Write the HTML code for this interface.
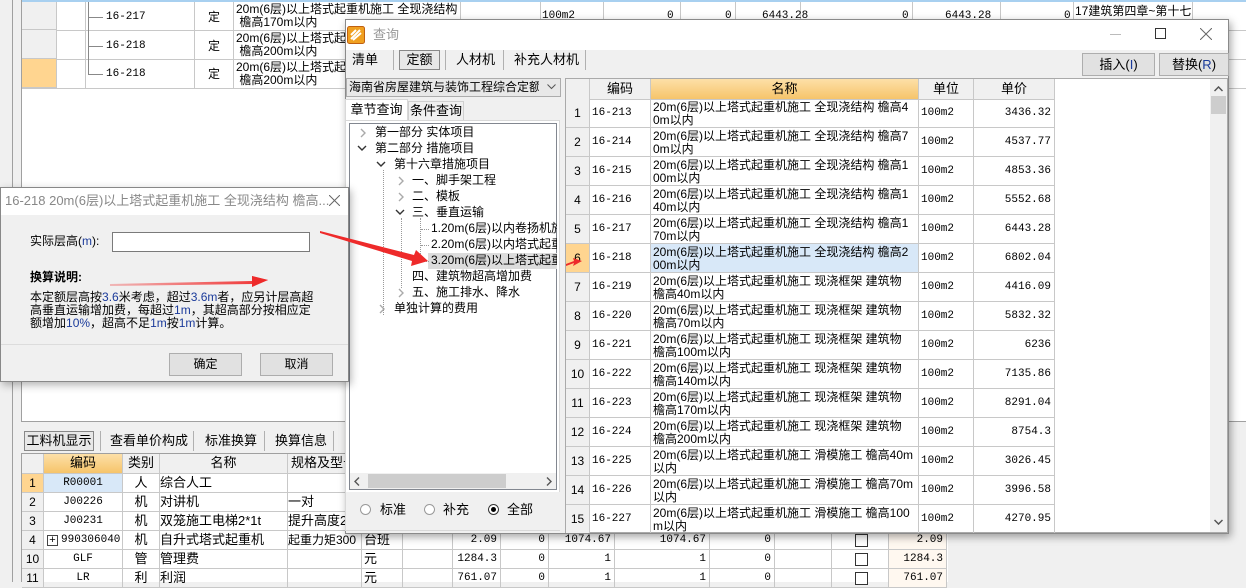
<!DOCTYPE html>
<html><head><meta charset="utf-8">
<style>
*{box-sizing:border-box;margin:0;padding:0}
body{width:1246px;height:582px;overflow:hidden;background:#f0f0f0;position:relative;font-family:"Liberation Sans","Noto Sans CJK SC",sans-serif;font-size:12px;color:#000}
.a{position:absolute}
.t{position:absolute;white-space:nowrap;line-height:13px}
.vl{position:absolute;width:1px;background:#c8c8c8}
.hl{position:absolute;height:1px;background:#c8c8c8}
.cell{position:absolute;border-right:1px solid #c8c8c8;border-bottom:1px solid #c8c8c8;white-space:nowrap;overflow:hidden;line-height:13px}
.r{text-align:right;padding-right:3px;font-family:"Liberation Mono","Noto Sans CJK SC",monospace;font-size:11px}
.m{font-family:"Liberation Mono","Noto Sans CJK SC",monospace;font-size:11px}
.c{text-align:center}
.btn{position:absolute;background:#e1e1e1;border:1px solid #adadad;text-align:center;font-size:12px}
.cr{position:absolute}
</style></head><body>

<div class="a" style="left:12px;top:0;width:1px;height:582px;background:#a0a0a0"></div>
<div class="a" style="left:21px;top:0;width:1225px;height:422px;background:#fff;border-left:1px solid #a0a0a0;border-bottom:1px solid #a0a0a0"></div>
<div class="a" style="left:22px;top:0;width:1224px;height:2px;background:#a8d0f0"></div>
<div class="a" style="left:22px;top:2px;width:35px;height:28px;background:#f0f0f0;border-bottom:1px solid #c8c8c8;border-right:1px solid #c8c8c8"></div>
<div class="a" style="left:22px;top:30px;width:35px;height:29px;background:#f0f0f0;border-bottom:1px solid #c8c8c8;border-right:1px solid #c8c8c8"></div>
<div class="a" style="left:22px;top:59px;width:35px;height:29px;background:#ffd590;border-bottom:1px solid #c8c8c8;border-right:1px solid #c8c8c8"></div>
<div class="hl" style="left:57px;top:30px;width:1189px"></div>
<div class="hl" style="left:57px;top:59px;width:1189px"></div>
<div class="hl" style="left:22px;top:88px;width:1224px"></div>
<div class="vl" style="left:85px;top:2px;height:86px"></div>
<div class="vl" style="left:194px;top:2px;height:86px"></div>
<div class="vl" style="left:233px;top:2px;height:86px"></div>
<div class="vl" style="left:460px;top:2px;height:86px"></div>
<div class="vl" style="left:540px;top:2px;height:20px"></div>
<div class="vl" style="left:603px;top:2px;height:20px"></div>
<div class="vl" style="left:680px;top:2px;height:20px"></div>
<div class="vl" style="left:735px;top:2px;height:20px"></div>
<div class="vl" style="left:800px;top:2px;height:20px"></div>
<div class="vl" style="left:912px;top:2px;height:20px"></div>
<div class="vl" style="left:1000px;top:2px;height:20px"></div>
<div class="vl" style="left:1073px;top:2px;height:20px"></div>
<div class="vl" style="left:1192px;top:2px;height:86px"></div>
<div class="a" style="left:88px;top:17px;width:15px;height:1px;background:#888"></div>
<div class="a" style="left:88px;top:46px;width:15px;height:1px;background:#888"></div>
<div class="a" style="left:88px;top:74px;width:15px;height:1px;background:#888"></div>
<div class="a" style="left:88px;top:2px;width:1px;height:72px;background:#888"></div>
<div class="t m" style="left:106px;top:11px">16-217</div>
<div class="t m" style="left:106px;top:40px">16-218</div>
<div class="t m" style="left:106px;top:68px">16-218</div>
<div class="t" style="left:208px;top:11px">定</div>
<div class="t" style="left:208px;top:40px">定</div>
<div class="t" style="left:208px;top:68px">定</div>
<div class="t" style="left:236px;top:3px">20m(6层)以上塔式起重机施工 全现浇结构<br>&nbsp;檐高170m以内</div>
<div class="t" style="left:236px;top:32px">20m(6层)以上塔式起<br>&nbsp;檐高200m以内</div>
<div class="t" style="left:236px;top:61px">20m(6层)以上塔式起<br>&nbsp;檐高200m以内</div>
<div class="t m" style="left:542px;top:10px">100m2</div>
<div class="t m" style="left:667px;top:10px">0</div>
<div class="t m" style="left:725px;top:10px">0</div>
<div class="t m" style="left:762px;top:10px">6443.28</div>
<div class="t m" style="left:902px;top:10px">0</div>
<div class="t m" style="left:945px;top:10px">6443.28</div>
<div class="t m" style="left:1064px;top:10px">0</div>
<div class="t" style="left:1075px;top:5px">17建筑第四章~第十七</div>

<div class="btn" style="left:24px;top:431px;width:70px;height:20px;line-height:18px;background:#e8e8e8;border:1px solid #888;font-size:13px">工料机显示</div>
<div class="a" style="left:100px;top:431px;width:1px;height:20px;background:#b0b0b0"></div>
<div class="t" style="left:110px;top:434px;font-size:13px">查看单价构成</div>
<div class="a" style="left:193px;top:431px;width:1px;height:20px;background:#b0b0b0"></div>
<div class="t" style="left:205px;top:434px;font-size:13px">标准换算</div>
<div class="a" style="left:264px;top:431px;width:1px;height:20px;background:#b0b0b0"></div>
<div class="t" style="left:275px;top:434px;font-size:13px">换算信息</div>
<div class="a" style="left:333px;top:431px;width:1px;height:20px;background:#b0b0b0"></div>

<div class="a" style="left:21px;top:453px;width:927px;height:129px;background:#fff;border-left:1px solid #a0a0a0;border-top:1px solid #a0a0a0"></div>
<div class="cell" style="left:22px;top:454px;width:22px;height:20px;background:#f0f0f0"></div>
<div class="cell c" style="left:44px;top:454px;width:79px;height:20px;background:linear-gradient(#fde0a8,#f6c46a);line-height:18px;font-size:13px">编码</div>
<div class="cell c" style="left:123px;top:454px;width:37px;height:20px;background:#f0f0f0;line-height:18px;font-size:13px">类别</div>
<div class="cell c" style="left:160px;top:454px;width:128px;height:20px;background:#f0f0f0;line-height:18px;font-size:13px">名称</div>
<div class="cell" style="left:288px;top:454px;width:74px;height:20px;background:#f0f0f0;line-height:18px;font-size:13px;padding-left:3px">规格及型号</div>

<div class="cell c" style="left:22px;top:474px;width:22px;height:19px;background:#ffd590;line-height:18px">1</div>
<div class="cell c m" style="left:44px;top:474px;width:79px;height:19px;background:#d8e8f8;line-height:18px">R00001</div>
<div class="cell c" style="left:123px;top:474px;width:37px;height:19px;line-height:18px;font-size:13px">人</div>
<div class="cell" style="left:160px;top:474px;width:128px;height:19px;line-height:18px;font-size:13px">综合人工</div>
<div class="cell" style="left:288px;top:474px;width:74px;height:19px"></div>

<div class="cell c" style="left:22px;top:493px;width:22px;height:19px;background:#f0f0f0;line-height:18px">2</div>
<div class="cell c m" style="left:44px;top:493px;width:79px;height:19px;line-height:18px">J00226</div>
<div class="cell c" style="left:123px;top:493px;width:37px;height:19px;line-height:18px;font-size:13px">机</div>
<div class="cell" style="left:160px;top:493px;width:128px;height:19px;line-height:18px;font-size:13px">对讲机</div>
<div class="cell" style="left:288px;top:493px;width:74px;height:19px;line-height:18px;font-size:13px">一对</div>

<div class="cell c" style="left:22px;top:512px;width:22px;height:19px;background:#f0f0f0;line-height:18px">3</div>
<div class="cell c m" style="left:44px;top:512px;width:79px;height:19px;line-height:18px">J00231</div>
<div class="cell c" style="left:123px;top:512px;width:37px;height:19px;line-height:18px;font-size:13px">机</div>
<div class="cell" style="left:160px;top:512px;width:128px;height:19px;line-height:18px;font-size:13px">双笼施工电梯2*1t</div>
<div class="cell" style="left:288px;top:512px;width:74px;height:19px;line-height:18px;font-size:13px">提升高度200</div>

<div class="cell c" style="left:22px;top:531px;width:22px;height:19px;background:#f0f0f0;line-height:18px">4</div>
<div class="cell m" style="left:44px;top:531px;width:79px;height:19px;line-height:18px;padding-left:17px">990306040</div>
<div class="a" style="left:47px;top:535px;width:11px;height:11px;border:1px solid #444;font-size:11px;line-height:9px;text-align:center">+</div>
<div class="cell c" style="left:123px;top:531px;width:37px;height:19px;line-height:18px;font-size:13px">机</div>
<div class="cell" style="left:160px;top:531px;width:128px;height:19px;line-height:18px;font-size:13px">自升式塔式起重机</div>
<div class="cell" style="left:288px;top:531px;width:74px;height:19px;line-height:18px;font-size:12px">起重力矩300</div>

<div class="cell c" style="left:22px;top:550px;width:22px;height:19px;background:#f0f0f0;line-height:18px">10</div>
<div class="cell c m" style="left:44px;top:550px;width:79px;height:19px;line-height:18px">GLF</div>
<div class="cell c" style="left:123px;top:550px;width:37px;height:19px;line-height:18px;font-size:13px">管</div>
<div class="cell" style="left:160px;top:550px;width:128px;height:19px;line-height:18px;font-size:13px">管理费</div>
<div class="cell" style="left:288px;top:550px;width:74px;height:19px"></div>

<div class="cell c" style="left:22px;top:569px;width:22px;height:19px;background:#f0f0f0;line-height:18px">11</div>
<div class="cell c m" style="left:44px;top:569px;width:79px;height:19px;line-height:18px">LR</div>
<div class="cell c" style="left:123px;top:569px;width:37px;height:19px;line-height:18px;font-size:13px">利</div>
<div class="cell" style="left:160px;top:569px;width:128px;height:19px;line-height:18px;font-size:13px">利润</div>
<div class="cell" style="left:288px;top:569px;width:74px;height:19px"></div>

<div class="cell" style="left:362px;top:531px;width:41px;height:19px;line-height:18px;font-size:13px;padding-left:2px">台班</div>
<div class="cell" style="left:403px;top:531px;width:50px;height:19px"></div>
<div class="cell r" style="left:453px;top:531px;width:48px;height:19px;line-height:18px">2.09</div>
<div class="cell r" style="left:501px;top:531px;width:48px;height:19px;line-height:18px">0</div>
<div class="cell r" style="left:549px;top:531px;width:66px;height:19px;line-height:18px">1074.67</div>
<div class="cell r" style="left:615px;top:531px;width:95px;height:19px;line-height:18px">1074.67</div>
<div class="cell r" style="left:710px;top:531px;width:65px;height:19px;line-height:18px">0</div>
<div class="cell" style="left:775px;top:531px;width:57px;height:19px"></div>
<div class="cell" style="left:832px;top:531px;width:57px;height:19px"></div>
<div class="cell r" style="left:889px;top:531px;width:58px;height:19px;line-height:18px;background:#fff8f0">2.09</div>

<div class="cell" style="left:362px;top:550px;width:41px;height:19px;line-height:18px;font-size:13px;padding-left:2px">元</div>
<div class="cell" style="left:403px;top:550px;width:50px;height:19px"></div>
<div class="cell r" style="left:453px;top:550px;width:48px;height:19px;line-height:18px">1284.3</div>
<div class="cell r" style="left:501px;top:550px;width:48px;height:19px;line-height:18px">0</div>
<div class="cell r" style="left:549px;top:550px;width:66px;height:19px;line-height:18px">1</div>
<div class="cell r" style="left:615px;top:550px;width:95px;height:19px;line-height:18px">1</div>
<div class="cell r" style="left:710px;top:550px;width:65px;height:19px;line-height:18px">0</div>
<div class="cell" style="left:775px;top:550px;width:57px;height:19px"></div>
<div class="cell" style="left:832px;top:550px;width:57px;height:19px"></div>
<div class="cell r" style="left:889px;top:550px;width:58px;height:19px;line-height:18px;background:#fff8f0">1284.3</div>

<div class="cell" style="left:362px;top:569px;width:41px;height:19px;line-height:18px;font-size:13px;padding-left:2px">元</div>
<div class="cell" style="left:403px;top:569px;width:50px;height:19px"></div>
<div class="cell r" style="left:453px;top:569px;width:48px;height:19px;line-height:18px">761.07</div>
<div class="cell r" style="left:501px;top:569px;width:48px;height:19px;line-height:18px">0</div>
<div class="cell r" style="left:549px;top:569px;width:66px;height:19px;line-height:18px">1</div>
<div class="cell r" style="left:615px;top:569px;width:95px;height:19px;line-height:18px">1</div>
<div class="cell r" style="left:710px;top:569px;width:65px;height:19px;line-height:18px">0</div>
<div class="cell" style="left:775px;top:569px;width:57px;height:19px"></div>
<div class="cell" style="left:832px;top:569px;width:57px;height:19px"></div>
<div class="cell r" style="left:889px;top:569px;width:58px;height:19px;line-height:18px;background:#fff8f0">761.07</div>
<div class="a" style="left:855px;top:534px;width:13px;height:13px;border:1px solid #333;background:#fff"></div>
<div class="a" style="left:855px;top:553px;width:13px;height:13px;border:1px solid #333;background:#fff"></div>
<div class="a" style="left:855px;top:572px;width:13px;height:13px;border:1px solid #333;background:#fff"></div>

<!-- Query dialog -->
<div class="a" style="left:345px;top:19px;width:884px;height:515px;background:#f0f0f0;border:1px solid #8a8a8a;box-shadow:2px 3px 8px rgba(0,0,0,.35)"></div>
<div class="a" style="left:346px;top:20px;width:882px;height:30px;background:#fff"></div>
<svg class="a" style="left:347px;top:26px" width="18" height="18" viewBox="0 0 18 18"><rect x="0.5" y="0.5" width="17" height="17" rx="2" fill="#f0a020" stroke="#c06010"/><path d="M4 13 L13 4 M6 14 L14 7 M4 9 L9 4" stroke="#fff" stroke-width="2"/></svg>
<div class="t" style="left:373px;top:28px;color:#999;font-size:13px">查询</div>
<div class="a" style="left:1110px;top:34px;width:11px;height:1px;background:#bbb"></div>
<div class="a" style="left:1155px;top:28px;width:11px;height:11px;border:1px solid #333"></div>
<svg class="a" style="left:1200px;top:28px" width="12" height="12"><path d="M0 0L12 12M12 0L0 12" stroke="#666" stroke-width="1"/></svg>

<div class="t" style="left:352px;top:53px;font-size:13px">清单</div>
<div class="a" style="left:393px;top:50px;width:1px;height:20px;background:#b0b0b0"></div>
<div class="btn" style="left:399px;top:50px;width:41px;height:20px;line-height:18px;background:#e8e8e8;border:1px solid #888;font-size:13px">定额</div>
<div class="a" style="left:445px;top:50px;width:1px;height:20px;background:#b0b0b0"></div>
<div class="t" style="left:456px;top:53px;font-size:13px">人材机</div>
<div class="a" style="left:503px;top:50px;width:1px;height:20px;background:#b0b0b0"></div>
<div class="t" style="left:514px;top:53px;font-size:13px">补充人材机</div>
<div class="a" style="left:585px;top:50px;width:1px;height:20px;background:#b0b0b0"></div>
<div class="btn" style="left:1082px;top:53px;width:73px;height:23px;line-height:21px;font-size:13px">插入(<span style="color:#1a3a9a">I</span>)</div>
<div class="btn" style="left:1159px;top:53px;width:70px;height:23px;line-height:21px;font-size:13px">替换(<span style="color:#1a3a9a">R</span>)</div>

<div class="a" style="left:346px;top:78px;width:215px;height:19px;background:#e8e8e8;border:1px solid #acacac;line-height:16px;padding-left:2px;font-size:12px;overflow:hidden;white-space:nowrap"><span style="display:inline-block;width:190px;overflow:hidden">海南省房屋建筑与装饰工程综合定额</span></div>
<svg class="a" style="left:547px;top:84px" width="9" height="6"><path d="M0.5 0.5L4.5 4.5L8.5 0.5" fill="none" stroke="#555"/></svg>
<div class="a" style="left:345px;top:99px;width:63px;height:22px;background:#fff;border:1px solid #d8d8d8;border-bottom:none;text-align:center;line-height:20px;font-size:13px">章节查询</div>
<div class="a" style="left:408px;top:101px;width:56px;height:20px;background:#f0f0f0;border:1px solid #d0d0d0;text-align:center;line-height:18px;font-size:13px">条件查询</div>
<div class="a" style="left:345px;top:120px;width:215px;height:411px;background:#fff;border:1px solid #d8d8d8"></div>
<div class="a" style="left:349px;top:123px;width:208px;height:367px;background:#fff;border:1px solid #828790;overflow:hidden"></div>
<div class="a" style="left:428px;top:253px;width:129px;height:16px;background:#dcdcdc"></div>
<!-- chevrons -->
<svg class="a" style="left:0;top:0" width="560" height="320">
<g fill="none" stroke-width="1.4">
<path d="M361 129l4 4-4 4" stroke="#aaa"/>
<path d="M358 146l4 4 4-4" stroke="#333"/>
<path d="M377 162l4 4 4-4" stroke="#333"/>
<path d="M399 177l4 4-4 4" stroke="#aaa"/>
<path d="M399 193l4 4-4 4" stroke="#aaa"/>
<path d="M396 210l4 4 4-4" stroke="#333"/>
<path d="M399 289l4 4-4 4" stroke="#aaa"/>
<path d="M380 305l4 4-4 4" stroke="#aaa"/>
</g></svg>
<div class="t" style="left:375px;top:126px">第一部分 实体项目</div>
<div class="t" style="left:375px;top:142px">第二部分 措施项目</div>
<div class="t" style="left:394px;top:158px">第十六章措施项目</div>
<div class="t" style="left:412px;top:174px">一、脚手架工程</div>
<div class="t" style="left:412px;top:190px">二、模板</div>
<div class="t" style="left:412px;top:206px">三、垂直运输</div>
<div class="a" style="left:431px;top:220px;width:126px;height:50px;overflow:hidden">
<div class="t" style="left:0;top:2px">1.20m(6层)以内卷扬机施工</div>
<div class="t" style="left:0;top:18px">2.20m(6层)以内塔式起重机</div>
<div class="t" style="left:0;top:34px">3.20m(6层)以上塔式起重机</div>
</div>
<div class="t" style="left:412px;top:270px">四、建筑物超高增加费</div>
<div class="t" style="left:412px;top:286px">五、施工排水、降水</div>
<div class="t" style="left:394px;top:302px">单独计算的费用</div>
<div class="a" style="left:383px;top:170px;width:0;height:145px;border-left:1px dotted #999"></div>
<div class="a" style="left:401px;top:218px;width:0;height:70px;border-left:1px dotted #999"></div>
<div class="a" style="left:420px;top:218px;width:0;height:44px;border-left:1px dotted #999"></div>
<div class="a" style="left:421px;top:229px;width:8px;height:0;border-top:1px dotted #999"></div>
<div class="a" style="left:421px;top:245px;width:8px;height:0;border-top:1px dotted #999"></div>
<div class="a" style="left:421px;top:261px;width:8px;height:0;border-top:1px dotted #999"></div>
<div class="a" style="left:350px;top:473px;width:206px;height:16px;background:#f0f0f0"></div>
<div class="a" style="left:368px;top:474px;width:138px;height:14px;background:#cdcdcd"></div>
<svg class="a" style="left:354px;top:477px" width="6" height="9"><path d="M5 0.5L1 4.5L5 8.5" fill="none" stroke="#555" stroke-width="1.4"/></svg>
<svg class="a" style="left:546px;top:477px" width="6" height="9"><path d="M1 0.5L5 4.5L1 8.5" fill="none" stroke="#555" stroke-width="1.4"/></svg>
<div class="a" style="left:346px;top:492px;width:214px;height:38px;background:#f0f0f0"></div>
<div class="a" style="left:360px;top:504px;width:11px;height:11px;border-radius:50%;border:1px solid #999;background:#fff"></div>
<div class="t" style="left:380px;top:503px;font-size:13px">标准</div>
<div class="a" style="left:424px;top:504px;width:11px;height:11px;border-radius:50%;border:1px solid #999;background:#fff"></div>
<div class="t" style="left:443px;top:503px;font-size:13px">补充</div>
<div class="a" style="left:488px;top:504px;width:11px;height:11px;border-radius:50%;border:1px solid #333;background:#fff"></div>
<div class="a" style="left:491px;top:507px;width:5px;height:5px;border-radius:50%;background:#000"></div>
<div class="t" style="left:507px;top:503px;font-size:13px">全部</div>

<div class="a" style="left:565px;top:78px;width:663px;height:455px;background:#fff;border:1px solid #aaa;overflow:hidden">
<div style="position:relative;width:663px;height:455px">
<div class="cell" style="left:0;top:0;width:24px;height:21px;background:#f0f0f0"></div>
<div class="cell c" style="left:24px;top:0;width:61px;height:21px;background:#f0f0f0;line-height:20px;font-size:13px">编码</div>
<div class="cell c" style="left:85px;top:0;width:268px;height:21px;background:linear-gradient(#fde0a8,#f6c46a);line-height:20px;font-size:13px">名称</div>
<div class="cell c" style="left:353px;top:0;width:55px;height:21px;background:#f0f0f0;line-height:20px;font-size:13px">单位</div>
<div class="cell c" style="left:408px;top:0;width:81px;height:21px;background:#f0f0f0;line-height:20px;font-size:13px">单价</div>
</div></div>
<div class="a" style="left:566px;top:99px;width:489px;height:434px;overflow:hidden">
<div style="position:relative">
<div class="cell c" style="left:0;top:0;width:24px;height:29px;background:#f0f0f0;line-height:28px">1</div><div class="cell m" style="left:24px;top:0;width:61px;height:29px;line-height:28px;padding-left:2px">16-213</div><div class="cell" style="left:85px;top:0;width:268px;height:29px;padding:2px 0 0 2px">20m(6层)以上塔式起重机施工 全现浇结构 檐高4<br>0m以内</div><div class="cell m" style="left:353px;top:0;width:55px;height:29px;line-height:28px;padding-left:2px">100m2</div><div class="cell r" style="left:408px;top:0;width:81px;height:29px;line-height:28px">3436.32</div>
<div class="cell c" style="left:0;top:29px;width:24px;height:29px;background:#f0f0f0;line-height:28px">2</div><div class="cell m" style="left:24px;top:29px;width:61px;height:29px;line-height:28px;padding-left:2px">16-214</div><div class="cell" style="left:85px;top:29px;width:268px;height:29px;padding:2px 0 0 2px">20m(6层)以上塔式起重机施工 全现浇结构 檐高7<br>0m以内</div><div class="cell m" style="left:353px;top:29px;width:55px;height:29px;line-height:28px;padding-left:2px">100m2</div><div class="cell r" style="left:408px;top:29px;width:81px;height:29px;line-height:28px">4537.77</div>
<div class="cell c" style="left:0;top:58px;width:24px;height:29px;background:#f0f0f0;line-height:28px">3</div><div class="cell m" style="left:24px;top:58px;width:61px;height:29px;line-height:28px;padding-left:2px">16-215</div><div class="cell" style="left:85px;top:58px;width:268px;height:29px;padding:2px 0 0 2px">20m(6层)以上塔式起重机施工 全现浇结构 檐高1<br>00m以内</div><div class="cell m" style="left:353px;top:58px;width:55px;height:29px;line-height:28px;padding-left:2px">100m2</div><div class="cell r" style="left:408px;top:58px;width:81px;height:29px;line-height:28px">4853.36</div>
<div class="cell c" style="left:0;top:87px;width:24px;height:29px;background:#f0f0f0;line-height:28px">4</div><div class="cell m" style="left:24px;top:87px;width:61px;height:29px;line-height:28px;padding-left:2px">16-216</div><div class="cell" style="left:85px;top:87px;width:268px;height:29px;padding:2px 0 0 2px">20m(6层)以上塔式起重机施工 全现浇结构 檐高1<br>40m以内</div><div class="cell m" style="left:353px;top:87px;width:55px;height:29px;line-height:28px;padding-left:2px">100m2</div><div class="cell r" style="left:408px;top:87px;width:81px;height:29px;line-height:28px">5552.68</div>
<div class="cell c" style="left:0;top:116px;width:24px;height:29px;background:#f0f0f0;line-height:28px">5</div><div class="cell m" style="left:24px;top:116px;width:61px;height:29px;line-height:28px;padding-left:2px">16-217</div><div class="cell" style="left:85px;top:116px;width:268px;height:29px;padding:2px 0 0 2px">20m(6层)以上塔式起重机施工 全现浇结构 檐高1<br>70m以内</div><div class="cell m" style="left:353px;top:116px;width:55px;height:29px;line-height:28px;padding-left:2px">100m2</div><div class="cell r" style="left:408px;top:116px;width:81px;height:29px;line-height:28px">6443.28</div>
<div class="cell c" style="left:0;top:145px;width:24px;height:29px;background:#ffd590;line-height:28px">6</div><div class="cell m" style="left:24px;top:145px;width:61px;height:29px;line-height:28px;padding-left:2px">16-218</div><div class="cell" style="left:85px;top:145px;width:268px;height:29px;padding:2px 0 0 2px;background:#d8e8f8">20m(6层)以上塔式起重机施工 全现浇结构 檐高2<br>00m以内</div><div class="cell m" style="left:353px;top:145px;width:55px;height:29px;line-height:28px;padding-left:2px">100m2</div><div class="cell r" style="left:408px;top:145px;width:81px;height:29px;line-height:28px">6802.04</div>
<div class="cell c" style="left:0;top:174px;width:24px;height:29px;background:#f0f0f0;line-height:28px">7</div><div class="cell m" style="left:24px;top:174px;width:61px;height:29px;line-height:28px;padding-left:2px">16-219</div><div class="cell" style="left:85px;top:174px;width:268px;height:29px;padding:2px 0 0 2px">20m(6层)以上塔式起重机施工 现浇框架 建筑物<br>檐高40m以内</div><div class="cell m" style="left:353px;top:174px;width:55px;height:29px;line-height:28px;padding-left:2px">100m2</div><div class="cell r" style="left:408px;top:174px;width:81px;height:29px;line-height:28px">4416.09</div>
<div class="cell c" style="left:0;top:203px;width:24px;height:29px;background:#f0f0f0;line-height:28px">8</div><div class="cell m" style="left:24px;top:203px;width:61px;height:29px;line-height:28px;padding-left:2px">16-220</div><div class="cell" style="left:85px;top:203px;width:268px;height:29px;padding:2px 0 0 2px">20m(6层)以上塔式起重机施工 现浇框架 建筑物<br>檐高70m以内</div><div class="cell m" style="left:353px;top:203px;width:55px;height:29px;line-height:28px;padding-left:2px">100m2</div><div class="cell r" style="left:408px;top:203px;width:81px;height:29px;line-height:28px">5832.32</div>
<div class="cell c" style="left:0;top:232px;width:24px;height:29px;background:#f0f0f0;line-height:28px">9</div><div class="cell m" style="left:24px;top:232px;width:61px;height:29px;line-height:28px;padding-left:2px">16-221</div><div class="cell" style="left:85px;top:232px;width:268px;height:29px;padding:2px 0 0 2px">20m(6层)以上塔式起重机施工 现浇框架 建筑物<br>檐高100m以内</div><div class="cell m" style="left:353px;top:232px;width:55px;height:29px;line-height:28px;padding-left:2px">100m2</div><div class="cell r" style="left:408px;top:232px;width:81px;height:29px;line-height:28px">6236</div>
<div class="cell c" style="left:0;top:261px;width:24px;height:29px;background:#f0f0f0;line-height:28px">10</div><div class="cell m" style="left:24px;top:261px;width:61px;height:29px;line-height:28px;padding-left:2px">16-222</div><div class="cell" style="left:85px;top:261px;width:268px;height:29px;padding:2px 0 0 2px">20m(6层)以上塔式起重机施工 现浇框架 建筑物<br>檐高140m以内</div><div class="cell m" style="left:353px;top:261px;width:55px;height:29px;line-height:28px;padding-left:2px">100m2</div><div class="cell r" style="left:408px;top:261px;width:81px;height:29px;line-height:28px">7135.86</div>
<div class="cell c" style="left:0;top:290px;width:24px;height:29px;background:#f0f0f0;line-height:28px">11</div><div class="cell m" style="left:24px;top:290px;width:61px;height:29px;line-height:28px;padding-left:2px">16-223</div><div class="cell" style="left:85px;top:290px;width:268px;height:29px;padding:2px 0 0 2px">20m(6层)以上塔式起重机施工 现浇框架 建筑物<br>檐高170m以内</div><div class="cell m" style="left:353px;top:290px;width:55px;height:29px;line-height:28px;padding-left:2px">100m2</div><div class="cell r" style="left:408px;top:290px;width:81px;height:29px;line-height:28px">8291.04</div>
<div class="cell c" style="left:0;top:319px;width:24px;height:29px;background:#f0f0f0;line-height:28px">12</div><div class="cell m" style="left:24px;top:319px;width:61px;height:29px;line-height:28px;padding-left:2px">16-224</div><div class="cell" style="left:85px;top:319px;width:268px;height:29px;padding:2px 0 0 2px">20m(6层)以上塔式起重机施工 现浇框架 建筑物<br>檐高200m以内</div><div class="cell m" style="left:353px;top:319px;width:55px;height:29px;line-height:28px;padding-left:2px">100m2</div><div class="cell r" style="left:408px;top:319px;width:81px;height:29px;line-height:28px">8754.3</div>
<div class="cell c" style="left:0;top:348px;width:24px;height:29px;background:#f0f0f0;line-height:28px">13</div><div class="cell m" style="left:24px;top:348px;width:61px;height:29px;line-height:28px;padding-left:2px">16-225</div><div class="cell" style="left:85px;top:348px;width:268px;height:29px;padding:2px 0 0 2px">20m(6层)以上塔式起重机施工 滑模施工 檐高40m<br>以内</div><div class="cell m" style="left:353px;top:348px;width:55px;height:29px;line-height:28px;padding-left:2px">100m2</div><div class="cell r" style="left:408px;top:348px;width:81px;height:29px;line-height:28px">3026.45</div>
<div class="cell c" style="left:0;top:377px;width:24px;height:29px;background:#f0f0f0;line-height:28px">14</div><div class="cell m" style="left:24px;top:377px;width:61px;height:29px;line-height:28px;padding-left:2px">16-226</div><div class="cell" style="left:85px;top:377px;width:268px;height:29px;padding:2px 0 0 2px">20m(6层)以上塔式起重机施工 滑模施工 檐高70m<br>以内</div><div class="cell m" style="left:353px;top:377px;width:55px;height:29px;line-height:28px;padding-left:2px">100m2</div><div class="cell r" style="left:408px;top:377px;width:81px;height:29px;line-height:28px">3996.58</div>
<div class="cell c" style="left:0;top:406px;width:24px;height:29px;background:#f0f0f0;line-height:28px">15</div><div class="cell m" style="left:24px;top:406px;width:61px;height:29px;line-height:28px;padding-left:2px">16-227</div><div class="cell" style="left:85px;top:406px;width:268px;height:29px;padding:2px 0 0 2px">20m(6层)以上塔式起重机施工 滑模施工 檐高100<br>m以内</div><div class="cell m" style="left:353px;top:406px;width:55px;height:29px;line-height:28px;padding-left:2px">100m2</div><div class="cell r" style="left:408px;top:406px;width:81px;height:29px;line-height:28px">4270.95</div>
</div></div>
<div class="a" style="left:1210px;top:79px;width:17px;height:453px;background:#f0f0f0"></div>
<div class="a" style="left:1211px;top:96px;width:15px;height:18px;background:#cdcdcd"></div>
<svg class="a" style="left:1214px;top:86px" width="9" height="6"><path d="M0.5 5L4.5 1L8.5 5" fill="none" stroke="#555" stroke-width="1.5"/></svg>
<svg class="a" style="left:1214px;top:519px" width="9" height="6"><path d="M0.5 1L4.5 5L8.5 1" fill="none" stroke="#555" stroke-width="1.5"/></svg>

<!-- small dialog -->
<div class="a" style="left:0;top:187px;width:349px;height:195px;background:#f0f0f0;border:1px solid #888;box-shadow:2px 3px 8px rgba(0,0,0,.3)"></div>
<div class="a" style="left:1px;top:188px;width:347px;height:27px;background:#fff"></div>
<div class="t" style="left:5px;top:194px;color:#888;font-size:13px">16-218 20m(6层)以上塔式起重机施工 全现浇结构 檐高...</div>
<svg class="a" style="left:329px;top:195px" width="11" height="11"><path d="M0 0L11 11M11 0L0 11" stroke="#666"/></svg>
<div class="t" style="left:30px;top:235px">实际层高(<span style="color:#1a3a9a">m</span>):</div>
<div class="a" style="left:112px;top:232px;width:198px;height:20px;background:#fff;border:1px solid #7a7a7a"></div>
<div class="t" style="left:30px;top:271px;font-weight:bold">换算说明:</div>
<div class="t" style="left:30px;top:291px;line-height:13px">本定额层高按<span style="color:#1a3a9a">3.6</span>米考虑，超过<span style="color:#1a3a9a">3.6m</span>者，应另计层高超<br>高垂直运输增加费，每超过<span style="color:#1a3a9a">1m</span>，其超高部分按相应定<br>额增加<span style="color:#1a3a9a">10%</span>，超高不足<span style="color:#1a3a9a">1m</span>按<span style="color:#1a3a9a">1m</span>计算。</div>
<div class="a" style="left:1px;top:344px;width:347px;height:1px;background:#dcdcdc"></div>
<div class="btn" style="left:169px;top:353px;width:73px;height:23px;line-height:21px">确定</div>
<div class="btn" style="left:260px;top:353px;width:73px;height:23px;line-height:21px">取消</div>

<svg class="a" style="left:0;top:0" width="1246" height="582">
<defs><linearGradient id="g1" x1="0" x2="1"><stop offset="0" stop-color="#f03030" stop-opacity=".3"/><stop offset="1" stop-color="#f03030"/></linearGradient></defs>
<polygon points="320,231 414,255 416,250 428,261 411,266 412,261 320,233" fill="#ee2a2a"/>
<polygon points="110,284 252,281 252,276 268,280 252,286 252,284 110,286" fill="url(#g1)"/>
<polygon points="252,276 268,280 252,287" fill="#ee2a2a"/>
<polygon points="566,264 574,261 573,258 582,261 573,266 574,263 566,266" fill="#ee2a2a"/>
</svg>
</body></html>
